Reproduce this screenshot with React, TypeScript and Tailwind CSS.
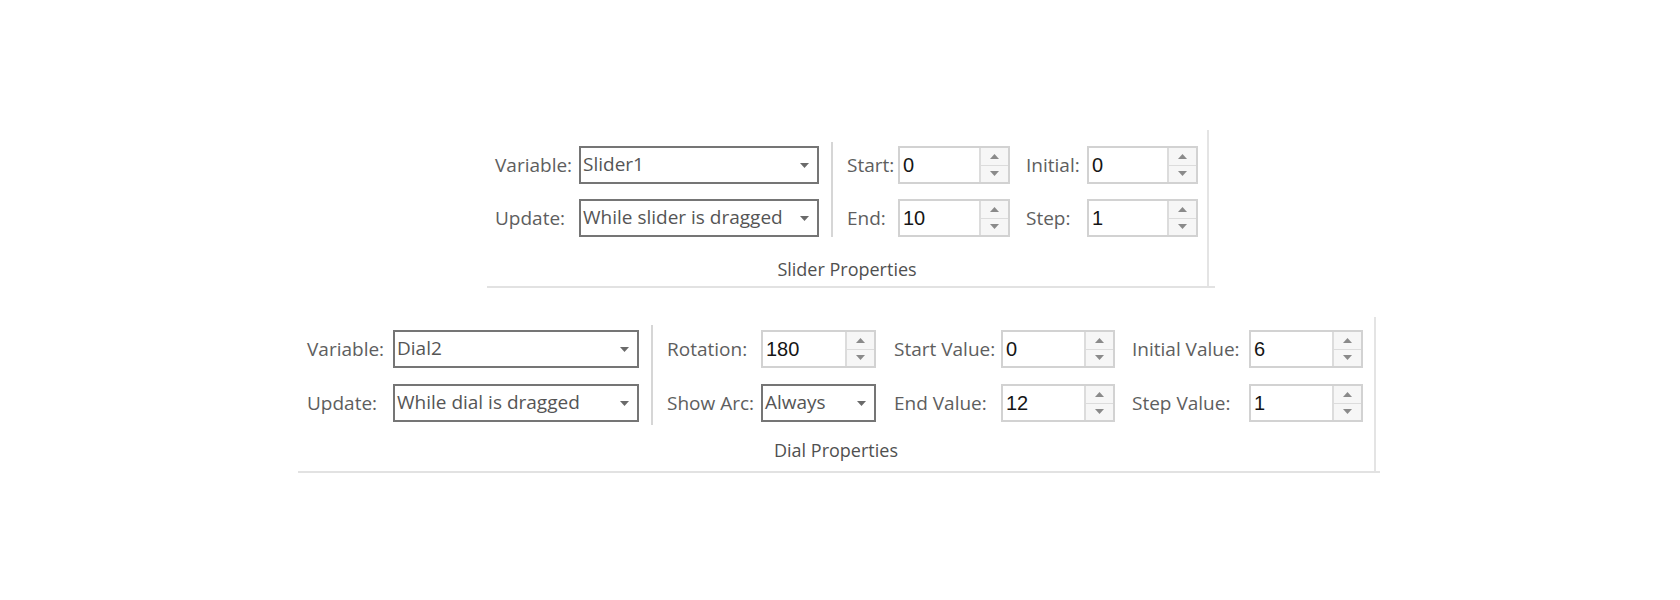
import React from 'react';

const labelFont = "font-['Open_Sans','Noto_Sans',sans-serif]";

function DownArrow() {
  return (
    <svg width="9" height="5" viewBox="0 0 9 5" className="shrink-0">
      <path d="M0 0 L9 0 L4.5 5 Z" fill="#6a6a6a" />
    </svg>
  );
}

function ComboBox({ value, width }: { value: string; width: string }) {
  return (
    <div
      className={`flex h-[38px] items-center justify-between border-2 border-[#757575] bg-white pl-[2px] pr-[8px] ${width}`}
    >
      <span className={`${labelFont} -mt-[2px] text-[19px] leading-none text-[#555]`}>{value}</span>
      <DownArrow />
    </div>
  );
}

function Spinner({ value, width }: { value: string; width: string }) {
  return (
    <div className={`flex h-[38px] border-2 border-[#d2d2d2] bg-white ${width}`}>
      <div className="flex flex-1 items-center pl-[3px]">
        <span className="font-['Liberation_Sans',Arial,sans-serif] text-[20px] leading-none text-[#151515]">
          {value}
        </span>
      </div>
      <div className="flex w-[29px] flex-col border-l-2 border-[#dcdcdc] bg-[#f6f6f6]">
        <div className="flex flex-1 items-center justify-center border-b border-[#dcdcdc]">
          <svg width="9" height="5" viewBox="0 0 9 5">
            <path d="M0 5 L9 5 L4.5 0 Z" fill="#8a8a8a" />
          </svg>
        </div>
        <div className="flex flex-1 items-center justify-center">
          <svg width="9" height="5" viewBox="0 0 9 5">
            <path d="M0 0 L9 0 L4.5 5 Z" fill="#8a8a8a" />
          </svg>
        </div>
      </div>
    </div>
  );
}

function Label({ text, width }: { text: string; width: string }) {
  return (
    <span className={`${labelFont} shrink-0 text-[19px] leading-none text-[#5e5e5e] ${width}`}>{text}</span>
  );
}

function Field({ children }: { children: React.ReactNode }) {
  return <div className="flex items-center">{children}</div>;
}

export default function App() {
  return (
    <div className="h-[600px] w-[1680px] bg-white pt-[130px]">
      {/* Slider properties group */}
      <div className="ml-[487px] w-[728px] border-b-2 border-[#e2e2e2]">
        <div className="w-[722px] border-r-2 border-[#e4e4e4] pt-[16px] pb-[8px]">
          <div className="flex">
            <div className="flex flex-col gap-[15px] pl-[8px]">
              <Field>
                <Label text="Variable:" width="w-[84px]" />
                <ComboBox value="Slider1" width="w-[240px]" />
              </Field>
              <Field>
                <Label text="Update:" width="w-[84px]" />
                <ComboBox value="While slider is dragged" width="w-[240px]" />
              </Field>
            </div>
            <div className="mx-[12px] -mt-[4px] w-[2px] bg-[#d6d6d6]" />
            <div className="flex flex-col gap-[15px] pl-[2px]">
              <Field>
                <Label text="Start:" width="w-[51px]" />
                <Spinner value="0" width="w-[112px]" />
              </Field>
              <Field>
                <Label text="End:" width="w-[51px]" />
                <Spinner value="10" width="w-[112px]" />
              </Field>
            </div>
            <div className="flex flex-col gap-[15px] pl-[16px]">
              <Field>
                <Label text="Initial:" width="w-[61px]" />
                <Spinner value="0" width="w-[111px]" />
              </Field>
              <Field>
                <Label text="Step:" width="w-[61px]" />
                <Spinner value="1" width="w-[111px]" />
              </Field>
            </div>
          </div>
          <div className={`${labelFont} mt-[23px] text-center text-[18px] leading-none text-[#505050]`}>
            Slider Properties
          </div>
        </div>
      </div>

      {/* Dial properties group */}
      <div className="mt-[29px] ml-[298px] w-[1082px] border-b-2 border-[#e2e2e2]">
        <div className="w-[1078px] border-r-2 border-[#e4e4e4] pt-[13px] pb-[12px]">
          <div className="flex">
            <div className="flex flex-col gap-[16px] pl-[9px]">
              <Field>
                <Label text="Variable:" width="w-[86px]" />
                <ComboBox value="Dial2" width="w-[246px]" />
              </Field>
              <Field>
                <Label text="Update:" width="w-[86px]" />
                <ComboBox value="While dial is dragged" width="w-[246px]" />
              </Field>
            </div>
            <div className="mx-[12px] -mt-[5px] -mb-[3px] w-[2px] bg-[#d6d6d6]" />
            <div className="flex flex-col gap-[16px] pl-[2px]">
              <Field>
                <Label text="Rotation:" width="w-[94px]" />
                <Spinner value="180" width="w-[115px]" />
              </Field>
              <Field>
                <Label text="Show Arc:" width="w-[94px]" />
                <ComboBox value="Always" width="w-[115px]" />
              </Field>
            </div>
            <div className="flex flex-col gap-[16px] pl-[18px]">
              <Field>
                <Label text="Start Value:" width="w-[107px]" />
                <Spinner value="0" width="w-[114px]" />
              </Field>
              <Field>
                <Label text="End Value:" width="w-[107px]" />
                <Spinner value="12" width="w-[114px]" />
              </Field>
            </div>
            <div className="flex flex-col gap-[16px] pl-[17px]">
              <Field>
                <Label text="Initial Value:" width="w-[117px]" />
                <Spinner value="6" width="w-[114px]" />
              </Field>
              <Field>
                <Label text="Step Value:" width="w-[117px]" />
                <Spinner value="1" width="w-[114px]" />
              </Field>
            </div>
          </div>
          <div className={`${labelFont} mt-[19px] text-center text-[18px] leading-none text-[#505050]`}>
            Dial Properties
          </div>
        </div>
      </div>
    </div>
  );
}
